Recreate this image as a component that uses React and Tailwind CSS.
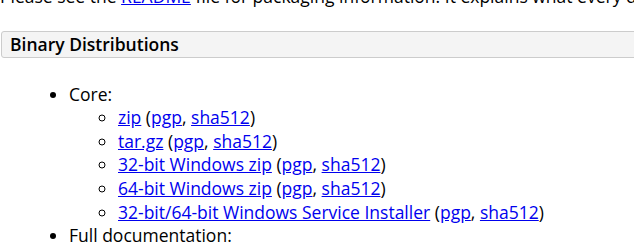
export default function App() {
  const sub = [
    '32-bit Windows zip',
    '64-bit Windows zip',
    '32-bit/64-bit Windows Service Installer',
  ];

  return (
    <div className="w-[634px] h-[245px] overflow-hidden bg-white text-black font-['Open_Sans',sans-serif] text-[17.5px] leading-[23.6px]">
      <p className="-mt-[15px] whitespace-nowrap">
        Please see the <a href="#" className="text-[#0000ee] underline">README</a> file for packaging information. It explains what every distribution contains.
      </p>

      <div className="mt-[22px] ml-px w-[700px] h-[27px] border border-[#cccccc] rounded-[3px] bg-[#f4f4f4] pl-[8px] font-semibold leading-[25px]">
        Binary Distributions
      </div>

      <ul className="list-disc pl-[69px] mt-[25px]">
        <li>
          Core:
          <ul className="list-[circle] pl-[49px]">
            <li>
              <a href="#" className="text-[#0000ee] underline">zip</a> (
              <a href="#" className="text-[#0000ee] underline">pgp</a>,{' '}
              <a href="#" className="text-[#0000ee] underline">sha512</a>)
            </li>
            <li>
              <a href="#" className="text-[#0000ee] underline">tar.gz</a> (
              <a href="#" className="text-[#0000ee] underline">pgp</a>,{' '}
              <a href="#" className="text-[#0000ee] underline">sha512</a>)
            </li>
            {sub.map((s) => (
              <li key={s}>
                <a href="#" className="text-[#0000ee] underline">{s}</a> (
                <a href="#" className="text-[#0000ee] underline">pgp</a>,{' '}
                <a href="#" className="text-[#0000ee] underline">sha512</a>)
              </li>
            ))}
          </ul>
        </li>
        <li>Full documentation:</li>
      </ul>
    </div>
  );
}
